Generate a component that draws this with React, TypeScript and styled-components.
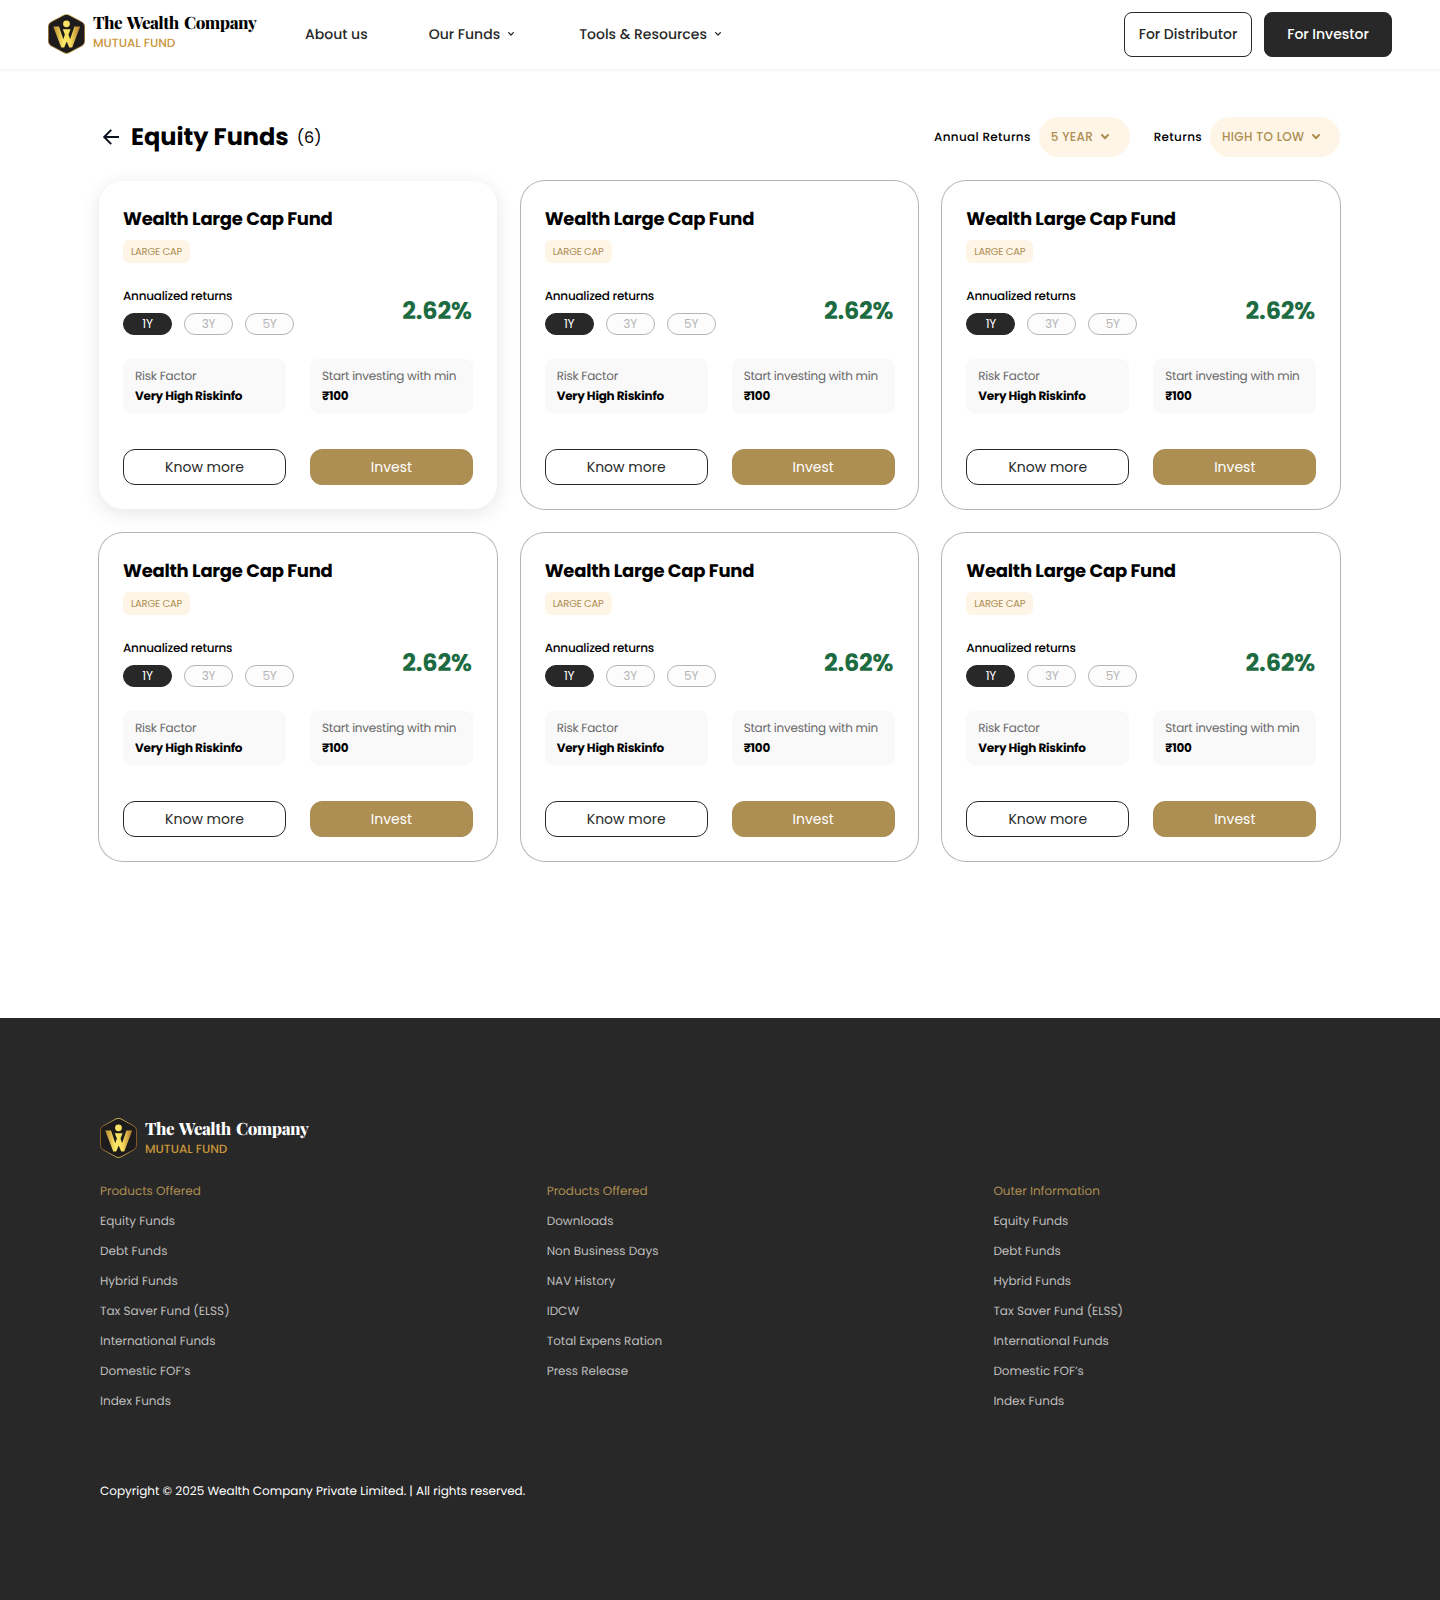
import React from "react";
import styled, { createGlobalStyle, css } from "styled-components";

const ink = "#282828";
const gold = "#ad8e53";
const cream = "#fef5e7";

const GlobalStyle = createGlobalStyle`
  *, *::before, *::after { box-sizing: border-box; }
  body {
    margin: 0;
    background: #fff;
    color: #000;
    font-family: Poppins, Inter, "Noto Sans", sans-serif;
    font-size: 12px;
    line-height: 18px;
    text-rendering: geometricPrecision;
  }
  button { font: inherit; margin: 0; padding: 0; cursor: pointer; }
`;

const Page = styled.div`
  width: 1440px;
  height: 1600px;
  display: flex;
  flex-direction: column;
  overflow: hidden;
`;

/* ---------- brand ---------- */

const Brand = styled.a`
  display: flex;
  align-items: flex-start;
  gap: 8px;
  width: 209px;
  height: 40px;
  white-space: nowrap;

  svg { flex: none; }
`;

const BrandText = styled.div<{ $light?: boolean }>`
  display: flex;
  flex-direction: column;
  padding-top: ${(p) => (p.$light ? 2 : 0)}px;
  color: ${(p) => (p.$light ? "#fff" : "#000")};
`;

const BrandName = styled.span`
  font-family: "Playfair Display", "Liberation Serif", serif;
  font-weight: 800;
  font-size: 17px;
  line-height: 20px;
  letter-spacing: -0.5px;
  word-spacing: 2px;
  margin-top: -1px;
`;

const BrandSub = styled.span`
  font-size: 12px;
  line-height: 18px;
  font-weight: 500;
  color: #c8963a;
  letter-spacing: 0;
  margin-top: 2px;
`;

function Emblem({ id }: { id: string }) {
  return (
    <svg width="37" height="40" viewBox="0 0 37 40" fill="none">
      <defs>
        <linearGradient id={`${id}-rim`} x1="0" y1="0" x2="1" y2="0">
          <stop offset="0" stopColor="#9a6a24" />
          <stop offset="0.5" stopColor="#f3dc66" />
          <stop offset="1" stopColor="#9a6a24" />
        </linearGradient>
        <linearGradient id={`${id}-w`} x1="5" y1="0" x2="32" y2="0" gradientUnits="userSpaceOnUse">
          <stop offset="0" stopColor="#b8832f" />
          <stop offset="0.38" stopColor="#fbe868" />
          <stop offset="0.65" stopColor="#f6dc5c" />
          <stop offset="1" stopColor="#b07a2a" />
        </linearGradient>
      </defs>
      <path
        d="M16 0.9Q18.5 -0.3 21 0.9L34 8.1Q36.5 9.6 36.5 12.2V27.6Q36.5 30.2 34 31.7L21 38.9Q18.5 40.2 16 38.9L3 31.7Q0.5 30.2 0.5 27.6V12.2Q0.5 9.6 3 8.1Z"
        fill="#1d1b1c"
        stroke={`url(#${id}-rim)`}
        strokeWidth="0.8"
      />
      <circle cx="18.5" cy="9.8" r="3.4" fill={`url(#${id}-w)`} />
      <path
        d="M5.2 12.4H11L15.3 25.2L16.9 20.4L14.8 15.2H22.6L20.5 20.4L22.1 25.2L26.4 12.4H32.2L24.2 33.6H21.2L18.7 27.4L16.2 33.6H13.2Z"
        fill={`url(#${id}-w)`}
      />
    </svg>
  );
}

function Logo({ id, light }: { id: string; light?: boolean }) {
  return (
    <Brand>
      <Emblem id={id} />
      <BrandText $light={light}>
        <BrandName>The Wealth Company</BrandName>
        <BrandSub>MUTUAL FUND</BrandSub>
      </BrandText>
    </Brand>
  );
}

/* ---------- header ---------- */

const Header = styled.header`
  flex: none;
  display: flex;
  align-items: center;
  height: 69px;
  padding: 0 48px 1px;
  box-shadow: 0 1px 3px rgba(0, 0, 0, 0.07);
`;

const Nav = styled.nav`
  display: flex;
  align-items: center;
  gap: 61px;
  margin-left: 48px;
`;

const NavItem = styled.a`
  display: flex;
  align-items: center;
  font-size: 14px;
  line-height: 20px;
  font-weight: 500;
  color: ${ink};
  white-space: nowrap;

  svg { margin-left: 8px; margin-right: 4px; }
`;

const HeaderActions = styled.div`
  display: flex;
  gap: 12px;
  margin-top: 1px;
  margin-left: auto;
`;

const HeaderButton = styled.button<{ $solid?: boolean }>`
  width: 128px;
  height: 45px;
  padding-bottom: 1px;
  border: 1px solid ${ink};
  border-radius: 8px;
  background: ${(p) => (p.$solid ? ink : "#fff")};
  color: ${(p) => (p.$solid ? "#fff" : ink)};
  font-size: 14px;
  font-weight: 500;
`;

function Chevron({ w, h, stroke }: { w: number; h: number; stroke: number }) {
  const s = stroke / 2;
  return (
    <svg width={w} height={h} viewBox={`0 0 ${w} ${h}`} fill="none">
      <path
        d={`M${s} ${s}L${w / 2} ${h - s - 0.4}L${w - s} ${s}`}
        stroke="currentColor"
        strokeWidth={stroke}
        strokeLinejoin="round"
        strokeLinecap="round"
      />
    </svg>
  );
}

/* ---------- listing ---------- */

const Main = styled.main`
  flex: none;
  height: 949px;
  padding: 48px 100px 0 99px;
`;

const ListHead = styled.div`
  display: flex;
  align-items: center;
  justify-content: space-between;
  height: 40px;
  margin-bottom: 24px;
`;

const Heading = styled.div`
  display: flex;
  align-items: center;
`;

const Title = styled.h1`
  margin: 0 0 0 8px;
  padding-top: 2px;
  font-size: 24px;
  line-height: 36px;
  font-weight: 700;
`;

const Count = styled.span`
  margin: 2px 0 0 8px;
  font-size: 16px;
  line-height: 24px;
`;

const Filters = styled.div`
  display: flex;
  align-items: center;
  gap: 24px;
`;

const Filter = styled.div`
  display: flex;
  align-items: center;
  gap: 8px;
  white-space: nowrap;
`;

const FilterLabel = styled.span`
  padding-top: 2px;
  font-weight: 500;
  letter-spacing: 0.32px;
`;

const Select = styled.button<{ $width: number }>`
  display: flex;
  align-items: center;
  gap: 8px;
  width: ${(p) => p.$width}px;
  height: 40px;
  padding: 0 12px;
  border: 0;
  border-radius: 20px;
  background: ${cream};
  color: ${gold};
  font-weight: 500;
  letter-spacing: 0.36px;
`;

const Grid = styled.div`
  display: grid;
  grid-template-columns: repeat(3, 397.67px);
  gap: 24px;
`;

const Card = styled.article<{ $raised?: boolean }>`
  height: 328px;
  padding: 24px;
  border-radius: 24px;
  background: #fff;
  box-shadow: ${(p) =>
    p.$raised ? "0 4px 20px rgba(0, 0, 0, 0.1)" : "0 0 0 1px #b5b5b5"};
`;

const FundName = styled.h2`
  height: 27px;
  margin: 0;
  padding-top: 1px;
  font-size: 18px;
  line-height: 27px;
  font-weight: 700;
  letter-spacing: -0.25px;
`;

const Tag = styled.span`
  display: inline-flex;
  align-items: center;
  justify-content: center;
  width: 67px;
  height: 23px;
  margin-top: 8px;
  border-radius: 6px;
  background: ${cream};
  color: ${gold};
  font-size: 10px;
  line-height: 15px;
  letter-spacing: -0.22px;
  vertical-align: top;
`;

const Returns = styled.div`
  display: flex;
  justify-content: space-between;
  align-items: center;
  margin-top: 24px;
`;

const ReturnsLabel = styled.div`
  padding-top: 1px;
  font-weight: 500;
  letter-spacing: -0.24px;
`;

const Periods = styled.div`
  display: flex;
  gap: 12px;
  margin-top: 7px;
`;

const Period = styled.button<{ $active?: boolean }>`
  width: 49px;
  height: 22px;
  border-radius: 11px;
  line-height: 18px;
  letter-spacing: -0.24px;
  ${(p) =>
    p.$active
      ? css`
          border: 1px solid ${ink};
          background: ${ink};
          color: #fff;
        `
      : css`
          border: 1px solid #b5b5b5;
          background: #fcfcfc;
          color: #b5b5b5;
        `}
`;

const Rate = styled.div`
  padding: 2px 1px 0 0;
  font-size: 24px;
  line-height: 36px;
  font-weight: 700;
  letter-spacing: -0.2px;
  color: #1c6b41;
`;

const Pair = styled.div`
  display: grid;
  grid-template-columns: repeat(2, 163px);
  gap: 24px;
`;

const Facts = styled(Pair)`
  margin-top: 24px;
`;

const Fact = styled.div`
  height: 54px;
  padding: 9px 0 0 12px;
  border-radius: 8px;
  background: #f9f9f9;
  white-space: nowrap;
`;

const FactLabel = styled.div`
  color: #686868;
  letter-spacing: -0.24px;
`;

const FactValue = styled.div`
  margin-top: 2px;
  font-weight: 700;
  letter-spacing: -0.24px;
`;

const Actions = styled(Pair)`
  margin-top: 36px;
`;

const ActionButton = styled.button<{ $solid?: boolean }>`
  height: 36px;
  border: 1px solid ${(p) => (p.$solid ? gold : ink)};
  border-radius: 12px;
  background: ${(p) => (p.$solid ? gold : "#fff")};
  color: ${(p) => (p.$solid ? "#fff" : ink)};
  font-size: 14px;
`;

function FundCard({ raised }: { raised?: boolean }) {
  return (
    <Card $raised={raised}>
      <FundName>Wealth Large Cap Fund</FundName>
      <Tag>LARGE CAP</Tag>
      <Returns>
        <div>
          <ReturnsLabel>Annualized returns</ReturnsLabel>
          <Periods>
            <Period $active>1Y</Period>
            <Period>3Y</Period>
            <Period>5Y</Period>
          </Periods>
        </div>
        <Rate>2.62%</Rate>
      </Returns>
      <Facts>
        <Fact>
          <FactLabel>Risk Factor</FactLabel>
          <FactValue>Very High Riskinfo</FactValue>
        </Fact>
        <Fact>
          <FactLabel>Start investing with min</FactLabel>
          <FactValue>₹100</FactValue>
        </Fact>
      </Facts>
      <Actions>
        <ActionButton>Know more</ActionButton>
        <ActionButton $solid>Invest</ActionButton>
      </Actions>
    </Card>
  );
}

/* ---------- footer ---------- */

const Footer = styled.footer`
  flex: 1;
  padding: 100px 100px 0;
  background: ${ink};
`;

const Columns = styled.div`
  display: grid;
  grid-template-columns: repeat(3, 446.7px);
  height: 258px;
  margin-top: 25px;
`;

const Column = styled.div`
  display: flex;
  flex-direction: column;
  align-items: flex-start;
  gap: 12px;
`;

const ColumnTitle = styled.div`
  color: ${gold};
`;

const FooterLink = styled.a`
  color: #bdbdbd;
`;

const Copyright = styled.div`
  margin-top: 42px;
  color: #fff;
`;

const products = [
  "Equity Funds",
  "Debt Funds",
  "Hybrid Funds",
  "Tax Saver Fund (ELSS)",
  "International Funds",
  "Domestic FOF’s",
  "Index Funds",
];

const columns = [
  { title: "Products Offered", links: products },
  {
    title: "Products Offered",
    links: [
      "Downloads",
      "Non Business Days",
      "NAV History",
      "IDCW",
      "Total Expens Ration",
      "Press Release",
    ],
  },
  { title: "Outer Information", links: products },
];

export default function App() {
  return (
    <Page>
      <GlobalStyle />
      <Header>
        <Logo id="top" />
        <Nav>
          <NavItem>About us</NavItem>
          <NavItem>
            Our Funds
            <Chevron w={6} h={4} stroke={1.3} />
          </NavItem>
          <NavItem>
            Tools &amp; Resources
            <Chevron w={6} h={4} stroke={1.3} />
          </NavItem>
        </Nav>
        <HeaderActions>
          <HeaderButton>For Distributor</HeaderButton>
          <HeaderButton $solid>For Investor</HeaderButton>
        </HeaderActions>
      </Header>

      <Main>
        <ListHead>
          <Heading>
            <svg width="24" height="24" viewBox="0 0 24 24" fill="none">
              <path
                d="M20 12H5.6M12.2 4.9L5.2 12L12.2 19.1"
                stroke="#0c1220"
                strokeWidth="2"
              />
            </svg>
            <Title>Equity Funds</Title>
            <Count>(6)</Count>
          </Heading>
          <Filters>
            <Filter>
              <FilterLabel>Annual Returns</FilterLabel>
              <Select $width={91}>
                5 YEAR
                <Chevron w={8} h={5.6} stroke={2} />
              </Select>
            </Filter>
            <Filter>
              <FilterLabel>Returns</FilterLabel>
              <Select $width={130}>
                HIGH TO LOW
                <Chevron w={8} h={5.6} stroke={2} />
              </Select>
            </Filter>
          </Filters>
        </ListHead>
        <Grid>
          {[0, 1, 2, 3, 4, 5].map((i) => (
            <FundCard key={i} raised={i === 0} />
          ))}
        </Grid>
      </Main>

      <Footer>
        <Logo id="bottom" light />
        <Columns>
          {columns.map((c, i) => (
            <Column key={i}>
              <ColumnTitle>{c.title}</ColumnTitle>
              {c.links.map((l) => (
                <FooterLink key={l}>{l}</FooterLink>
              ))}
            </Column>
          ))}
        </Columns>
        <Copyright>Copyright © 2025 Wealth Company Private Limited. | All rights reserved.</Copyright>
      </Footer>
    </Page>
  );
}
